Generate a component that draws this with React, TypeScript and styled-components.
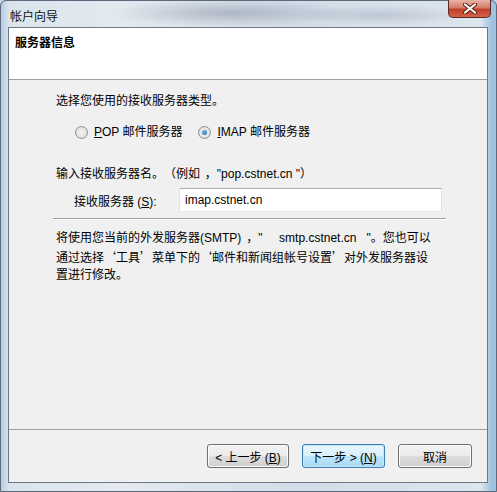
import styled, { createGlobalStyle } from 'styled-components';

const GlobalStyle = createGlobalStyle`
  html, body {
    margin: 0;
    padding: 0;
    background: #c9d6e3;
  }
  * {
    box-sizing: border-box;
  }
`;

const FONT = `"Liberation Sans", "Noto Sans CJK SC", sans-serif`;

const App = () => {
  return (
    <>
      <GlobalStyle />
      <Window>
        <TitleBar>
          <TitleText>帐户向导</TitleText>
          <CloseButton aria-label='close'>
            <svg width='14' height='11' viewBox='0 0 14 11'>
              <path
                d='M2 1.5 L12 9.5 M12 1.5 L2 9.5'
                stroke='#5a1d12'
                strokeWidth='4'
                strokeLinecap='round'
              />
              <path
                d='M2 1.5 L12 9.5 M12 1.5 L2 9.5'
                stroke='#fff'
                strokeWidth='2.2'
                strokeLinecap='round'
              />
            </svg>
          </CloseButton>
        </TitleBar>

        <Client>
          <Header>
            <HeaderTitle>服务器信息</HeaderTitle>
          </Header>

          <Body>
            <Label>选择您使用的接收服务器类型。</Label>

            <RadioRow>
              <RadioOption>
                <Radio />
                <span>
                  <u>P</u>OP 邮件服务器
                </span>
              </RadioOption>
              <RadioOption>
                <Radio $checked />
                <span>
                  <u>I</u>MAP 邮件服务器
                </span>
              </RadioOption>
            </RadioRow>

            <Label $top={25}>
              输入接收服务器名。<Cjk>（</Cjk>例如<Cjk $center>，</Cjk>"pop.cstnet.cn "<Cjk>）</Cjk>
            </Label>

            <InputRow>
              <FieldLabel>
                接收服务器 (<u>S</u>):
              </FieldLabel>
              <TextBox>imap.cstnet.cn</TextBox>
            </InputRow>

            <Separator />

            <Note>
              将使用您当前的外发服务器(SMTP)<Cjk $center>，</Cjk>"&nbsp;&nbsp;&nbsp;&nbsp;&nbsp;smtp.cstnet.cn&nbsp;&nbsp;&nbsp;"。您也可以
              <br />
              通过选择<Cjk>‘</Cjk>工具<Cjk>’</Cjk>菜单下的<Cjk>‘</Cjk>邮件和新闻组帐号设置<Cjk>’</Cjk>对外发服务器设
              <br />
              置进行修改。
            </Note>
          </Body>

          <Footer>
            <Button $width={82}>
              &lt; 上一步 (<u>B</u>)
            </Button>
            <Button $width={83} $primary>
              下一步 &gt; (<u>N</u>)
            </Button>
            <Button $width={74}>取消</Button>
          </Footer>
        </Client>
      </Window>
    </>
  );
};

export default App;

const Window = styled.div`
  width: 497px;
  height: 492px;
  display: flex;
  flex-direction: column;
  padding: 0 8px 8px 7px;
  font-family: ${FONT};
  font-size: 12px;
  color: #000;
  text-spacing-trim: space-all;
  background:
    radial-gradient(ellipse 120px 14px at 230px 12px, rgba(120, 130, 150, 0.45), transparent),
    radial-gradient(ellipse 90px 10px at 380px 14px, rgba(140, 150, 170, 0.35), transparent),
    linear-gradient(to right, #b8cde0 0px, #dbe4ec 8px, #e3e9ef 120px, #d3dde7 300px, #dde5ed 480px, #9fc3df 490px);
  border: 1px solid #5b6a7c;
  border-radius: 6px 6px 0 0;
`;

const TitleBar = styled.div`
  height: 26px;
  display: flex;
  align-items: flex-start;
  justify-content: space-between;
`;

const TitleText = styled.span`
  margin: 6px 0 0 2px;
  font-size: 12px;
  color: #111;
`;

const CloseButton = styled.div`
  width: 43px;
  height: 18px;
  margin-right: -3px;
  margin-top: -1px;
  display: flex;
  align-items: center;
  justify-content: center;
  border: 1px solid #5b2a22;
  border-top: none;
  border-radius: 0 0 5px 5px;
  background: linear-gradient(to bottom, #e8b4a8 0%, #d67a68 45%, #c0402a 55%, #d5604a 100%);
`;

const Client = styled.div`
  flex: 1;
  display: flex;
  flex-direction: column;
  background: #f0f0f0;
  border: 1px solid #6d7987;
`;

const Header = styled.div`
  height: 52px;
  background: #fff;
  border-bottom: 1px solid #a0a0a0;
  padding: 7px 0 0 6px;
`;

const HeaderTitle = styled.div`
  font-weight: bold;
  font-size: 12px;
  line-height: 16px;
`;

const Body = styled.div`
  flex: 1;
  display: flex;
  flex-direction: column;
  padding: 13px 0 0 47px;
`;

const Cjk = styled.span<{ $center?: boolean }>`
  font-family: "Noto Sans CJK SC", sans-serif;
  display: inline-block;
  width: ${({ $center }) => ($center ? '1.4em' : '1em')};
  padding-left: ${({ $center }) => ($center ? '0.4em' : '0')};
  text-align: ${({ $center }) => ($center ? 'left' : 'center')};
  white-space: nowrap;
`;

const Label = styled.div<{ $top?: number }>`
  line-height: 16px;
  margin-top: ${({ $top }) => $top ?? 0}px;
`;

const RadioRow = styled.div`
  display: flex;
  gap: 16px;
  margin: 15px 0 0 19px;
`;

const RadioOption = styled.label`
  display: flex;
  align-items: center;
  gap: 6px;
  line-height: 16px;
`;

const Radio = styled.span<{ $checked?: boolean }>`
  width: 13px;
  height: 13px;
  border-radius: 50%;
  border: 1px solid #8e8f8f;
  background: radial-gradient(circle at 50% 50%, #f4f4f4 0%, #d8d8d8 100%);
  display: flex;
  align-items: center;
  justify-content: center;

  &::after {
    content: '';
    display: ${({ $checked }) => ($checked ? 'block' : 'none')};
    width: 5px;
    height: 5px;
    border-radius: 50%;
    background: radial-gradient(circle at 40% 35%, #6fc0ea, #1c5b8a);
  }
`;

const InputRow = styled.div`
  display: flex;
  align-items: center;
  margin: 6px 0 0 18px;
`;

const FieldLabel = styled.span`
  width: 105px;
`;

const TextBox = styled.div`
  width: 263px;
  height: 24px;
  background: #fff;
  border: 1px solid #abadb3;
  border-color: #abadb3 #dbdfe6 #e3e9ef #e2e3ea;
  padding: 0 5px;
  display: flex;
  align-items: center;
`;

const Separator = styled.div`
  width: 393px;
  margin: 6px 0 0 -3px;
  border-top: 1px solid #a0a0a0;
  border-bottom: 1px solid #fff;
`;

const Note = styled.div`
  margin-top: 8px;
  line-height: 17.5px;
`;

const Footer = styled.div`
  height: 53px;
  border-top: 1px solid #a0a0a0;
  display: flex;
  justify-content: flex-end;
  align-items: flex-start;
  gap: 13px;
  padding: 14px 15px 0 0;
`;

const Button = styled.button<{ $primary?: boolean; $width: number }>`
  width: ${({ $width }) => $width}px;
  height: 24px;
  font-family: ${FONT};
  font-size: 12px;
  color: #000;
  padding: 0;
  border-radius: 3px;
  border: 1px solid ${({ $primary }) => ($primary ? '#3c7fb1' : '#707070')};
  box-shadow: inset 0 0 0 1px ${({ $primary }) => ($primary ? '#c4e5f6' : '#fbfbfb')};
  background: ${({ $primary }) =>
    $primary
      ? 'linear-gradient(to bottom, #eaf6fd 0%, #d9f0fc 50%, #bee6fd 51%, #a7d9f5 100%)'
      : 'linear-gradient(to bottom, #f2f2f2 0%, #ebebeb 50%, #dddddd 51%, #cfcfcf 100%)'};
`;
